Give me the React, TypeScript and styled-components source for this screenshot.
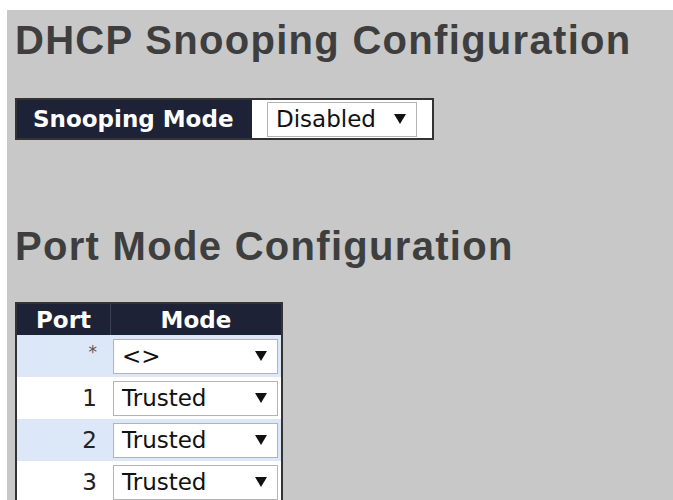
import React from 'react'
import styled, {createGlobalStyle} from 'styled-components'

const DARK = '#1e2236'
const STRIPE = '#dce8f8'
const BORDER = '#333333'

const GlobalStyle = createGlobalStyle`
  html, body {
    margin: 0;
    background: #ffffff;
  }
  body {
    padding: 10px 0 0 7px;
  }
`

const ports = [
  {id: '*', mode: '<>'},
  {id: '1', mode: 'Trusted'},
  {id: '2', mode: 'Trusted'},
  {id: '3', mode: 'Trusted'},
  {id: '4', mode: 'Trusted'},
]

const App = () => {
  return (
    <>
      <GlobalStyle />
      <StyledPage>
        <StyledHeading>DHCP Snooping Configuration</StyledHeading>

        <StyledModeBar>
          <StyledModeLabel>Snooping Mode</StyledModeLabel>
          <StyledModeValue>
            <Select value="Disabled" $width={150} />
          </StyledModeValue>
        </StyledModeBar>

        <StyledHeading $gap={82}>Port Mode Configuration</StyledHeading>

        <StyledPortTable>
          <StyledHeadCell>Port</StyledHeadCell>
          <StyledHeadCell $divider>Mode</StyledHeadCell>
          {ports.map((p, i) => (
            <React.Fragment key={p.id}>
              <StyledPortCell $striped={i % 2 === 0} $star={p.id === '*'}>
                {p.id}
              </StyledPortCell>
              <StyledSelectCell $striped={i % 2 === 0}>
                <Select value={p.mode} $width={165} />
              </StyledSelectCell>
            </React.Fragment>
          ))}
        </StyledPortTable>
      </StyledPage>
    </>
  )
}

const Select = ({value, $width}: {value: string; $width: number}) => (
  <StyledSelect $width={$width}>
    <span>{value}</span>
    <StyledArrow />
  </StyledSelect>
)

const StyledPage = styled.div`
  box-sizing: border-box;
  height: 490px;
  overflow: hidden;
  background: #c8c8c8;
  padding: 6px 0 0 8px;
  font-family: "DejaVu Sans", Verdana, sans-serif;
`

const StyledHeading = styled.h1<{$gap?: number}>`
  margin: ${p => p.$gap || 0}px 0 0;
  font-family: "Liberation Sans", Arial, sans-serif;
  font-weight: 700;
  font-size: 40px;
  line-height: 48px;
  letter-spacing: 1.3px;
  color: #3e3e3e;
`

const StyledModeBar = styled.div`
  display: inline-flex;
  box-sizing: border-box;
  height: 42px;
  margin-top: 34px;
  border: 2px solid ${BORDER};
`

const StyledModeLabel = styled.div`
  box-sizing: border-box;
  width: 235px;
  display: flex;
  align-items: center;
  padding-left: 16px;
  background: ${DARK};
  color: #ffffff;
  font-weight: 700;
  font-size: 23px;
`

const StyledModeValue = styled.div`
  box-sizing: border-box;
  width: 180px;
  display: flex;
  align-items: center;
  padding-left: 15px;
  background: #ffffff;
`

const StyledSelect = styled.div<{$width: number}>`
  box-sizing: border-box;
  width: ${p => p.$width}px;
  height: 35px;
  display: flex;
  align-items: center;
  justify-content: space-between;
  padding: 0 10px 0 8px;
  background: #ffffff;
  border: 1px solid #b4b4b4;
  color: #111111;
  font-size: 23px;
  white-space: nowrap;
`

const StyledArrow = styled.i`
  width: 0;
  height: 0;
  border-left: 6px solid transparent;
  border-right: 6px solid transparent;
  border-top: 10px solid #111111;
`

const StyledPortTable = styled.div`
  display: inline-grid;
  grid-template-columns: 93px 171px;
  grid-auto-rows: 42px;
  grid-template-rows: 31px;
  margin-top: 32px;
  border: 2px solid ${BORDER};
  border-bottom: none;
`

const StyledHeadCell = styled.div<{$divider?: boolean}>`
  display: flex;
  align-items: center;
  justify-content: center;
  background: ${DARK};
  color: #ffffff;
  font-weight: 700;
  font-size: 23px;
  border-left: ${p => (p.$divider ? '1px solid #3c4158' : 'none')};
`

const StyledPortCell = styled.div<{$striped: boolean; $star: boolean}>`
  display: flex;
  align-items: center;
  justify-content: flex-end;
  padding: ${p => (p.$star ? '0 13px 8px 0' : '0 13px 0 0')};
  background: ${p => (p.$striped ? STRIPE : '#ffffff')};
  color: ${p => (p.$star ? '#555555' : '#222222')};
  font-size: ${p => (p.$star ? 17 : 23)}px;
`

const StyledSelectCell = styled.div<{$striped: boolean}>`
  display: flex;
  align-items: center;
  padding-left: 3px;
  background: ${p => (p.$striped ? STRIPE : '#ffffff')};
`

export default App
